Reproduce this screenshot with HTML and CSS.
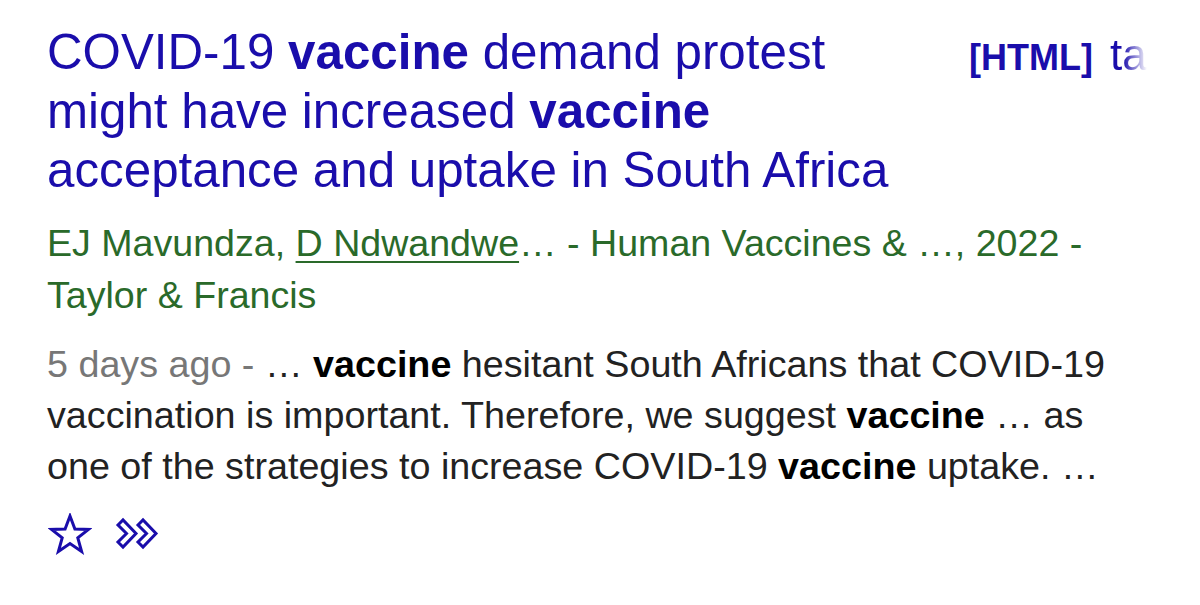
FILE: index.html
```html
<!DOCTYPE html>
<html lang="en">
<head>
    <meta charset="UTF-8">
    <meta name="viewport" content="width=device-width, initial-scale=1.0">
    <title>Scholar result</title>
    <link rel="stylesheet" href="styles.css">
</head>
<body>
    <div class="result">
        <div class="head">
            <h3 class="title">
                <a href="#">COVID-19 <b>vaccine</b> demand protest might have increased <b>vaccine</b> acceptance and uptake in South Africa</a>
            </h3>
            <div class="side">
                <a href="#" class="format">[HTML]</a>
                <span class="source">ta</span>
            </div>
        </div>

        <div class="meta">
            EJ Mavundza, <a href="#">D Ndwandwe</a>… - Human Vaccines &amp; …, 2022 - Taylor &amp; Francis
        </div>

        <div class="snippet">
            <span class="date">5 days ago - </span>… <b>vaccine</b> hesitant South Africans that COVID-19 vaccination is important. Therefore, we suggest <b>vaccine</b> … as one of the strategies to increase COVID-19 <b>vaccine</b> uptake. …
        </div>

        <div class="actions">
            <a href="#" class="icon">
                <svg width="44" height="42" viewBox="0 0 44 42">
                    <path d="M22 3 L26.9 16 L40.5 16.4 L29.8 24.9 L33.6 38.5 L22 30.6 L10.4 38.5 L14.2 24.9 L3.5 16.4 L17.1 16 Z" fill="none" stroke="#1a0dab" stroke-width="3"/>
                </svg>
            </a>
            <a href="#" class="icon">
                <svg width="46" height="42" viewBox="0 0 46 42">
                    <path d="M3 12 L8 7 L21 20.5 L8 34 L3 29 L11.5 20.5 Z" fill="none" stroke="#1a0dab" stroke-width="3"/>
                    <path d="M23 12 L28 7 L41 20.5 L28 34 L23 29 L31.5 20.5 Z" fill="none" stroke="#1a0dab" stroke-width="3"/>
                </svg>
            </a>
        </div>
    </div>
</body>
</html>
```

FILE: styles.css
```css
body {
    margin: 0;
    padding: 0;
    background: #fff;
    font-family: "Liberation Sans", Arial, sans-serif;
    overflow: hidden;
}
a {
    text-decoration: none;
    color: inherit;
}
.result {
    padding: 22px 0 0 47px;
}
.head {
    display: flex;
    align-items: flex-start;
}
.title {
    margin: 0;
    width: 900px;
    font-size: 49.3px;
    font-weight: normal;
    line-height: 59px;
    color: #1a0dab;
}
.side {
    display: flex;
    align-items: baseline;
    gap: 17px;
    margin-left: 22px;
    margin-top: 8px;
    white-space: nowrap;
}
.format {
    font-size: 36px;
    font-weight: bold;
    color: #1a0dab;
}
.source {
    font-size: 44px;
    color: #1a0dab;
    -webkit-mask-image: linear-gradient(to right, #000 35%, transparent 100%);
    mask-image: linear-gradient(to right, #000 35%, transparent 100%);
}
.meta {
    margin-top: 18px;
    width: 1060px;
    font-size: 37.6px;
    line-height: 52px;
    color: #2a6a2a;
}
.meta a {
    text-decoration: underline;
    text-decoration-thickness: 2px;
    text-underline-offset: 5px;
}
.snippet {
    margin-top: 18px;
    width: 1065px;
    font-size: 37.7px;
    line-height: 51px;
    color: #222;
}
.snippet b {
    color: #000;
}
.date {
    color: #777;
}
.actions {
    display: flex;
    gap: 23px;
    margin-top: 21px;
    margin-left: 1px;
}
.icon {
    display: block;
}
```
